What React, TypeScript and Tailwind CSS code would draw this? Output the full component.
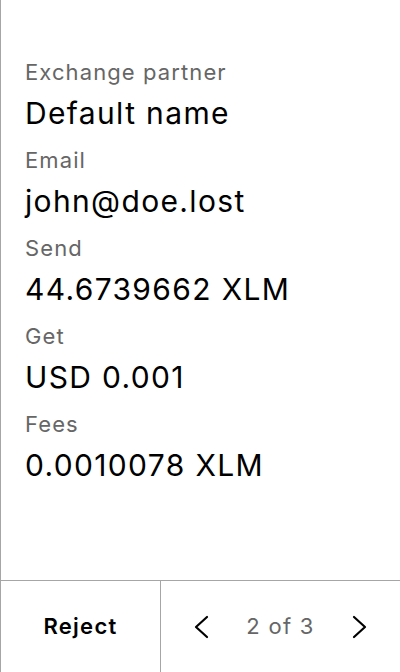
import React from "react";

const rows = [
  ["Exchange partner", "Default name"],
  ["Email", "john@doe.lost"],
  ["Send", "44.6739662 XLM"],
  ["Get", "USD 0.001"],
  ["Fees", "0.0010078 XLM"],
];

export default function App() {
  return (
    <div className="w-[400px] h-[672px] flex flex-col border-l border-[#a6a6a6] bg-white" style={{ fontFamily: "Inter, sans-serif" }}>
      <div className="flex-1 flex flex-col pl-6 pt-[58px]">
        {rows.map(([l, v]) => (
          <div key={l} className="flex flex-col mb-[15px]">
            <div className="text-[22px] leading-[28px] tracking-[1.1px] text-[#666666]">{l}</div>
            <div className="text-[30px] leading-[36px] tracking-[1.35px] text-black mt-[9px]">{v}</div>
          </div>
        ))}
      </div>
      <div className="h-[92px] flex border-t border-[#a6a6a6]">
        <div className="w-[160px] flex items-center justify-center border-r border-[#a6a6a6] text-[22px] tracking-[1.3px] font-semibold text-black">Reject</div>
        <div className="flex-1 flex items-center justify-between px-[32px]">
          <svg width="16" height="24" viewBox="0 0 16 24" fill="none" stroke="black" strokeWidth="2.2" strokeLinecap="round" strokeLinejoin="round"><path d="M14 2 L3 12 L14 22" /></svg>
          <span className="text-[22px] tracking-[1.3px] text-[#666666]">2 of 3</span>
          <svg width="16" height="24" viewBox="0 0 16 24" fill="none" stroke="black" strokeWidth="2.2" strokeLinecap="round" strokeLinejoin="round"><path d="M2 2 L13 12 L2 22" /></svg>
        </div>
      </div>
    </div>
  );
}
